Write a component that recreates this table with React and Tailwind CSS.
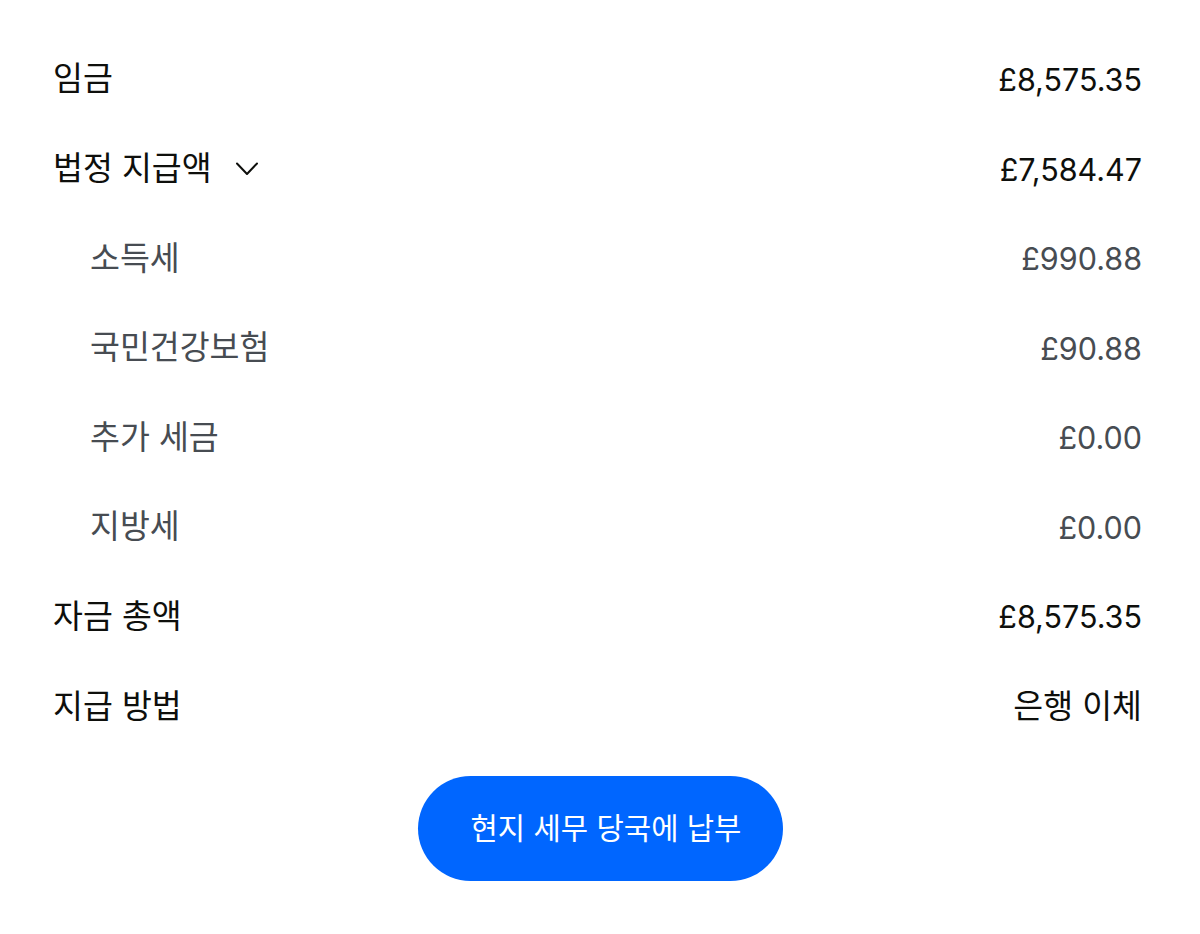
import React from "react";

const rows = [
  { label: "임금", value: "£8,575.35" },
  { label: "법정 지급액", value: "£7,584.47", chevron: true },
  { label: "소득세", value: "£990.88", sub: true },
  { label: "국민건강보험", value: "£90.88", sub: true },
  { label: "추가 세금", value: "£0.00", sub: true },
  { label: "지방세", value: "£0.00", sub: true },
  { label: "자금 총액", value: "£8,575.35" },
  { label: "지급 방법", value: "은행 이체", kr: true },
];

const font = { fontFamily: "Inter, 'Noto Sans CJK KR', sans-serif" };

export default function App() {
  return (
    <div className="w-[1200px] h-[934px] bg-white pt-[35px] pl-[53px] pr-[58px]" style={font}>
      <div className="flex flex-col">
        {rows.map((r, i) => (
          <div
            key={i}
            className={`flex items-center justify-between h-[89.6px] ${
              r.sub ? "pl-[37px] text-[#474c52]" : "text-[#0e0f0c]"
            }`}
          >
            <div className="flex items-center">
              <span className="text-[32.5px]">{r.label}</span>
              {r.chevron && (
                <svg className="ml-[23px]" width="24" height="24" viewBox="0 0 24 24" fill="none" stroke="currentColor" strokeWidth="2" strokeLinecap="round" strokeLinejoin="round">
                  <path d="M2 6.5l10 10.5 10-10.5" />
                </svg>
              )}
            </div>
            <span className={r.kr ? "text-[32.5px]" : "text-[30.5px]"}>{r.value}</span>
          </div>
        ))}
      </div>
      <div className="flex justify-center mt-[24px] pl-[5px]">
        <button className="w-[365px] h-[105px] rounded-full bg-[#0066ff] text-white text-[29.7px] pl-[12px] flex items-center justify-center">
          현지 세무 당국에 납부
        </button>
      </div>
    </div>
  );
}
